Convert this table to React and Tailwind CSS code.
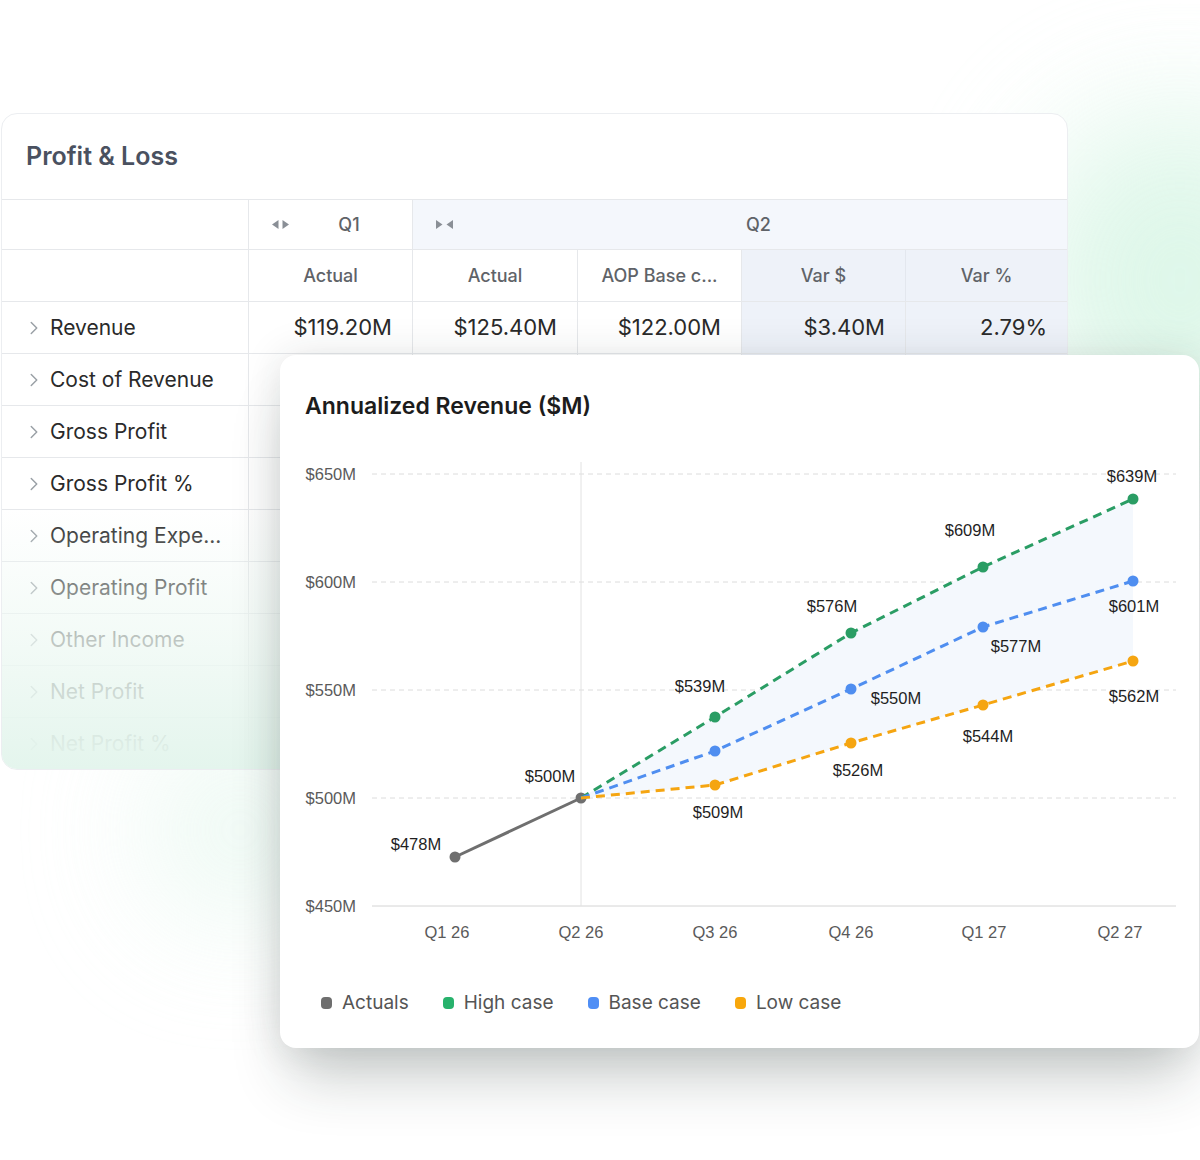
import { ChevronRight } from 'lucide-react';

const rows = [
  { label: 'Revenue', values: ['$119.20M', '$125.40M', '$122.00M', '$3.40M', '2.79%'] },
  { label: 'Cost of Revenue' },
  { label: 'Gross Profit' },
  { label: 'Gross Profit %' },
  { label: 'Operating Expe...' },
  { label: 'Operating Profit' },
  { label: 'Other Income' },
  { label: 'Net Profit' },
  { label: 'Net Profit %' },
];

const cols = 'grid grid-cols-[247px_164px_165px_164px_164px_161px]';

// chart points, in page pixels (viewBox matches the page)
const high = [[581, 798], [715, 717], [851, 633], [983, 567], [1133, 499]];
const base = [[581, 798], [715, 751], [851, 689], [983, 627], [1133, 581]];
const low = [[581, 798], [715, 785], [851, 743], [983, 705], [1133, 661]];

const dataLabels = [
  ['$478M', 416, 844], ['$500M', 550, 776], ['$539M', 700, 686], ['$509M', 718, 812],
  ['$576M', 832, 606], ['$550M', 896, 698], ['$526M', 858, 770], ['$609M', 970, 530],
  ['$577M', 1016, 646], ['$544M', 988, 736], ['$639M', 1132, 476], ['$601M', 1134, 606],
  ['$562M', 1134, 696],
];

const yTicks = [['$650M', 474], ['$600M', 582], ['$550M', 690], ['$500M', 798]];
const xTicks = [['Q1 26', 447], ['Q2 26', 581], ['Q3 26', 715], ['Q4 26', 851], ['Q1 27', 984], ['Q2 27', 1120]];

const legend = [
  { label: 'Actuals', color: 'bg-[#6e6e6e]' },
  { label: 'High case', color: 'bg-[#27b26c]' },
  { label: 'Base case', color: 'bg-[#4f8ef5]' },
  { label: 'Low case', color: 'bg-[#f8a70c]' },
];

function pts(list) {
  return list.map((p) => p.join(',')).join(' ');
}

function ArrowsOut() {
  return (
    <svg width="19" height="11" viewBox="0 0 19 11" className="fill-[#8a8f96]">
      <path d="M1 5.5 L7.5 1 L7.5 10 Z" />
      <path d="M18 5.5 L11.5 1 L11.5 10 Z" />
    </svg>
  );
}

function ArrowsIn() {
  return (
    <svg width="19" height="11" viewBox="0 0 19 11" className="fill-[#8a8f96]">
      <path d="M7.5 5.5 L1 1 L1 10 Z" />
      <path d="M11.5 5.5 L18 1 L18 10 Z" />
    </svg>
  );
}

function ProfitLossTable() {
  return (
    <div className="relative ml-px mt-[113px] w-[1067px] overflow-hidden rounded-t-[16px] rounded-bl-[16px] border border-[#eceef1] bg-white font-['Inter',sans-serif]">
      <div className="flex h-[85px] items-center px-6 text-[25px] font-semibold text-[#4a5160]">
        Profit &amp; Loss
      </div>

      <div className={`${cols} h-[50px] border-t border-[#e6e8eb] text-[18px] font-medium text-[#5f6368]`}>
        <div className="border-r border-[#e6e8eb]" />
        <div className="flex items-center border-r border-[#e6e8eb] pl-[22px]">
          <ArrowsOut />
          <span className="flex-1 pr-1 text-center">Q1</span>
        </div>
        <div className="col-span-4 flex items-center bg-[#f4f7fc] pl-[22px]">
          <ArrowsIn />
          <span className="flex-1 pr-1 text-center">Q2</span>
        </div>
      </div>

      <div className={`${cols} h-[52px] border-t border-[#e6e8eb] text-[18px] font-medium text-[#5f6368]`}>
        <div className="border-r border-[#e6e8eb]" />
        <div className="flex items-center justify-center border-r border-[#e6e8eb]">Actual</div>
        <div className="flex items-center justify-center border-r border-[#e6e8eb]">Actual</div>
        <div className="flex items-center justify-center border-r border-[#e6e8eb]">AOP Base c...</div>
        <div className="flex items-center justify-center border-r border-[#e3e7ee] bg-[#eef2f9]">Var $</div>
        <div className="flex items-center justify-center bg-[#eef2f9]">Var %</div>
      </div>

      {rows.map((row) => (
        <div key={row.label} className={`${cols} h-[52px] border-t border-[#e6e8eb] text-[#2a2a2a]`}>
          <div className="flex items-center gap-[5px] border-r border-[#e6e8eb] pl-[21px] text-[21px]">
            <ChevronRight size={22} strokeWidth={1.6} className="text-[#9aa0a6]" />
            <span>{row.label}</span>
          </div>
          {[0, 1, 2, 3, 4].map((i) => (
            <div
              key={i}
              className={`flex items-center justify-end pr-5 text-[22px] ${i < 4 ? 'border-r border-[#e6e8eb]' : ''} ${i >= 3 ? 'bg-[#eef2f9]' : ''}`}
            >
              {row.values ? row.values[i] : ''}
            </div>
          ))}
        </div>
      ))}

      <div className="pointer-events-none absolute inset-x-0 bottom-0 h-[260px] bg-linear-to-b from-[#f4fbf7]/0 via-[#eff9f4]/75 to-[#e4f5ed]" />
    </div>
  );
}

function RevenueChart() {
  return (
    <div className="absolute left-[280px] top-[355px] h-[693px] w-[919px] rounded-[16px] bg-white shadow-[0_40px_60px_-12px_rgba(30,45,40,0.24),0_0_40px_rgba(30,45,40,0.12)]">
      <div className="pl-[25px] pt-[37px] font-['Inter',sans-serif] text-[23px] font-semibold leading-[28px] text-[#1c1c1c]">
        Annualized Revenue ($M)
      </div>

      <svg className="mt-[30px] block" width="919" height="510" viewBox="280 450 919 510">
        <g fontFamily="'Liberation Sans', Arial, sans-serif" fontSize="16.5">
          {yTicks.map(([label, y]) => (
            <g key={label}>
              <line x1="372" x2="1176" y1={y} y2={y} stroke="#dcdcdc" strokeDasharray="5 4" />
              <text x="356" y={y} textAnchor="end" dominantBaseline="central" fill="#5a5a5a">{label}</text>
            </g>
          ))}
          <line x1="372" x2="1176" y1="906" y2="906" stroke="#d4d4d4" />
          <text x="356" y="906" textAnchor="end" dominantBaseline="central" fill="#5a5a5a">$450M</text>
          <line x1="581" x2="581" y1="462" y2="906" stroke="#e2e2e2" />
          {xTicks.map(([label, x]) => (
            <text key={label} x={x} y="932" textAnchor="middle" dominantBaseline="central" fill="#5a5a5a">{label}</text>
          ))}

          <polygon points={pts([...high, ...low.slice().reverse()])} fill="#f4f8fd" />

          <line x1="455" y1="857" x2="581" y2="798" stroke="#6f6f6f" strokeWidth="3" />
          <circle cx="455" cy="857" r="5.5" fill="#6f6f6f" />
          <circle cx="581" cy="798" r="5.5" fill="#6f6f6f" />

          <polyline points={pts(high)} fill="none" stroke="#2a9d64" strokeWidth="3" strokeDasharray="9 6" />
          <polyline points={pts(base)} fill="none" stroke="#4f8ef0" strokeWidth="3" strokeDasharray="9 6" />
          <polyline points={pts(low)} fill="none" stroke="#f5a511" strokeWidth="3" strokeDasharray="9 6" />

          {high.slice(1).map(([x, y]) => <circle key={`h${x}`} cx={x} cy={y} r="5.5" fill="#2a9d64" />)}
          {base.slice(1).map(([x, y]) => <circle key={`b${x}`} cx={x} cy={y} r="5.5" fill="#4f8ef0" />)}
          {low.slice(1).map(([x, y]) => <circle key={`l${x}`} cx={x} cy={y} r="5.5" fill="#f5a511" />)}

          {dataLabels.map(([label, x, y]) => (
            <text key={label} x={x} y={y} textAnchor="middle" dominantBaseline="central" fill="#1f1f1f">{label}</text>
          ))}
        </g>
      </svg>

      <div className="mt-[29px] flex items-center gap-[34px] pl-[41px] font-['Inter',sans-serif] text-[19px] text-[#555]">
        {legend.map((item) => (
          <div key={item.label} className="flex items-center gap-[10px]">
            <span className={`h-[12px] w-[11px] rounded-[4px] ${item.color}`} />
            <span>{item.label}</span>
          </div>
        ))}
      </div>
    </div>
  );
}

export default function App() {
  return (
    <div className="relative h-[1160px] w-[1200px] overflow-hidden bg-white">
      <div className="absolute left-[1030px] top-[110px] h-[340px] w-[300px] rounded-full bg-[#d6f5e4] opacity-80 blur-3xl" />
      <div className="absolute left-[150px] top-[740px] h-[180px] w-[180px] rounded-full bg-[#e2f6ec] opacity-70 blur-3xl" />
      <div className="relative">
        <ProfitLossTable />
      </div>
      <RevenueChart />
    </div>
  );
}
